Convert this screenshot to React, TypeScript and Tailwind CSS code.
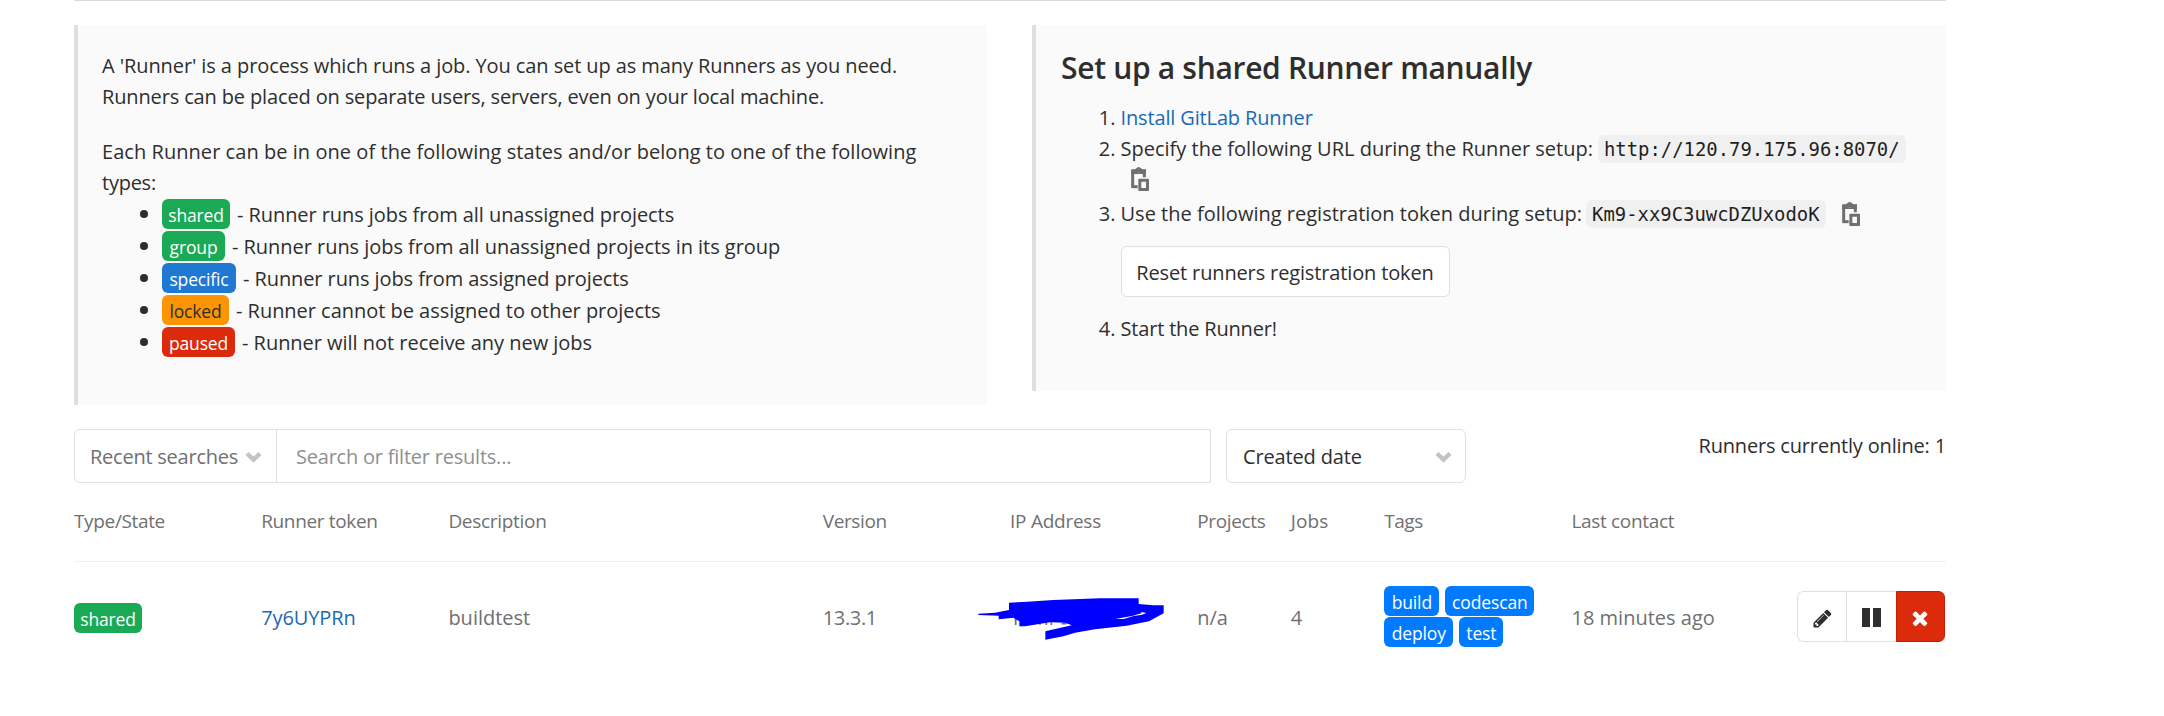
import type { ReactNode } from "react";

function Badge({ className, children }: { className: string; children: ReactNode }) {
  return (
    <span className={`flex h-[30px] shrink-0 items-center justify-center rounded-md text-[17.5px] leading-[30px] tracking-[-0.15px] ${className}`}>
      <span className="relative top-px">{children}</span>
    </span>
  );
}

function ClipboardIcon() {
  return (
    <svg className="h-6 w-[18px] shrink-0" viewBox="0 0 54 72" fill="none">
      <path d="M5 59V13h35v18" stroke="#707070" strokeWidth="9" />
      <path d="M1 59h19" stroke="#707070" strokeWidth="9" />
      <path fillRule="evenodd" d="M3 7h9l6-5q5-4 10 0l6 5h11v14H0V10zM23 8a5 5 0 1 0 .1 0z" fill="#707070" />
      <path fillRule="evenodd" d="M25 35h26q3 0 3 3v31q0 3-3 3H25q-3 0-3-3V38q0-3 3-3zm6 9v19h14V44z" fill="#707070" />
    </svg>
  );
}

function ChevronIcon() {
  return (
    <svg className="h-3 w-[17px] shrink-0" viewBox="0 0 17 12" fill="none">
      <path d="M2 2.5l6.5 6.2L15 2.5" stroke="#c4c4c4" strokeWidth="4.4" />
    </svg>
  );
}

function PencilIcon() {
  return (
    <svg className="size-[21px]" viewBox="0 0 1792 1792" fill="#2e2e2e">
      <path d="M491 1536l91-91-235-235-91 91v107h128v128h107zM1014 608q0-22-22-22-10 0-17 7l-542 542q-7 7-7 17 0 22 22 22 10 0 17-7l542-542q7-7 7-17zM960 416l416 416-832 832h-416v-416zM1643 512q0 53-37 90l-166 166-416-416 166-165q36-38 90-38 53 0 91 38l235 234q37 39 37 91z" />
    </svg>
  );
}

function CloseIcon() {
  return (
    <svg className="size-[22px]" viewBox="0 0 1792 1792" fill="#fff">
      <path d="M1490 1322q0 40-28 68l-136 136q-28 28-68 28t-68-28l-294-294-294 294q-28 28-68 28t-68-28l-136-136q-28-28-28-68t28-68l294-294-294-294q-28-28-28-68t28-68l136-136q28-28 68-28t68 28l294 294 294-294q28-28 68-28t68 28l136 136q28 28 28 68t-28 68l-294 294 294 294q28 28 28 68z" />
    </svg>
  );
}

function Scribble() {
  return (
    <svg className="absolute -left-10 -top-[27px] h-[60px] w-[210px]" viewBox="0 0 630 180">
      <path d="M137 84v21M134 88h8M190 101h5M210 92v12M229 97v8M244 97v8M275 101h14" stroke="#707070" strokeWidth="5" />
      <path
        d="M25 71L75 68 117 60V38L160 36 250 30 390 25H506V42L550 46H581V70L537 94 470 107 375 118 315 128 280 139 226 149V124L305 106 285 98 240 97 165 109H148V94L130 83 86 88V77L25 75Z"
        fill="#00f"
      />
      <path d="M436 87l50-9 28-8v-4l15 3-13 5-25 4-30 9z" fill="#fff" />
    </svg>
  );
}

const states = [
  { name: "shared", badge: "w-[68px] bg-[#1aaa55] text-white", text: "Runner runs jobs from all unassigned projects", track: "tracking-[-0.07px]" },
  { name: "group", badge: "w-[63px] bg-[#1aaa55] text-white", text: "Runner runs jobs from all unassigned projects in its group", track: "tracking-[-0.04px]" },
  { name: "specific", badge: "w-[74px] bg-[#1f78d1] text-white", text: "Runner runs jobs from assigned projects", track: "tracking-[-0.09px]" },
  { name: "locked", badge: "w-[67px] bg-[#fc9403] text-[#2e2e2e]", text: "Runner cannot be assigned to other projects", track: "tracking-[-0.03px]" },
  { name: "paused", badge: "w-[73px] bg-[#db2b0c] text-white", text: "Runner will not receive any new jobs", track: "tracking-[-0.03px]" },
];

const tags = [
  { name: "build", width: "w-[55px]" },
  { name: "codescan", width: "w-[89px]" },
  { name: "deploy", width: "w-[69px]" },
  { name: "test", width: "w-11" },
];

const columns = [
  { label: "Type/State", className: "w-[10%] tracking-[-0.35px]" },
  { label: "Runner token", className: "w-[10%] tracking-[-0.35px]" },
  { label: "Description", className: "w-1/5 tracking-[-0.3px]" },
  { label: "Version", className: "w-[10%] tracking-[-0.4px]" },
  { label: "IP Address", className: "w-[10%] tracking-[-0.25px]" },
  { label: "Projects", className: "w-[5%] tracking-[-0.35px]" },
  { label: "Jobs", className: "w-[5%] tracking-[0.15px]" },
  { label: "Tags", className: "w-[10%] tracking-[-0.5px]" },
  { label: "Last contact", className: "w-[10%] tracking-[-0.33px]" },
];

function Step({ n, children }: { n: number; children: ReactNode }) {
  return (
    <li className="flex">
      <span className="w-[60.5px] shrink-0 pr-[5px] text-right">{n}.</span>
      <div className="min-w-0 flex-1">{children}</div>
    </li>
  );
}

function Code({ className, children }: { className: string; children: ReactNode }) {
  return (
    <code className={`h-7 rounded-md bg-[#f0f0f0] px-1.5 font-['DejaVu_Sans_Mono',monospace] text-[18.9px] leading-7 text-[#1f1f1f] ${className}`}>
      {children}
    </code>
  );
}

export default function App() {
  return (
    <div className="h-[716px] bg-white font-['Open_Sans',sans-serif] text-[20px] leading-[31px] whitespace-nowrap text-[#2e2e2e]">
      <main className="ml-[74px] w-[1872px]">
        <div className="h-px bg-[#dbdbdb]" />

        <div className="mt-6 flex items-start justify-between">
          <section className="h-[380px] w-[913px] border-l-4 border-[#dfdfdf] bg-[#fafafa] pt-[25px] pl-6">
            <p className="tracking-[-0.09px]">A 'Runner' is a process which runs a job. You can set up as many Runners as you need.</p>
            <p className="tracking-[-0.14px]">Runners can be placed on separate users, servers, even on your local machine.</p>
            <p className="mt-6 tracking-[0.05px]">Each Runner can be in one of the following states and/or belong to one of the following</p>
            <p className="tracking-[-0.25px]">types:</p>
            <ul>
              {states.map((s) => (
                <li key={s.name} className="flex h-8 items-center pl-[38px]">
                  <span className="mr-[14px] size-2 rounded-full bg-[#2e2e2e]" />
                  <Badge className={s.badge}>{s.name}</Badge>
                  <span className={`ml-[7px] ${s.track}`}>- {s.text}</span>
                </li>
              ))}
            </ul>
          </section>

          <section className="h-[366px] w-[914px] border-l-4 border-[#dfdfdf] bg-[#fafafa] pt-[22px] pl-6">
            <h3 className="pl-px text-[30px] leading-[42px] font-semibold tracking-[-0.31px]">Set up a shared Runner manually</h3>
            <ol className="mt-[13px]">
              <Step n={1}>
                <a className="tracking-[-0.14px] text-[#1b69b6]">Install GitLab Runner</a>
              </Step>
              <Step n={2}>
                <div className="flex items-center">
                  <span>Specify the following URL during the Runner setup:</span>
                  <Code className="ml-[5px]">http://120.79.175.96:8070/</Code>
                </div>
                <div className="flex h-[34px] pt-[3px] pl-[10px]">
                  <ClipboardIcon />
                </div>
              </Step>
              <Step n={3}>
                <div className="flex items-center">
                  <span className="tracking-[0.01px]">Use the following registration token during setup:</span>
                  <Code className="mr-4 ml-1">Km9-xx9C3uwcDZUxodoK</Code>
                  <ClipboardIcon />
                </div>
                <button className="mt-[17px] mb-4 block h-[51px] w-[329px] rounded-md border border-[#dfdfdf] bg-white pt-px tracking-[-0.14px]">
                  Reset runners registration token
                </button>
              </Step>
              <Step n={4}>
                <span className="tracking-[-0.18px]">Start the Runner!</span>
              </Step>
            </ol>
          </section>
        </div>

        <div className="mt-6 flex h-[54px]">
          <div className="flex w-[1137px] rounded-l-md border border-[#dfdfdf]">
            <button className="flex w-[202px] items-center border-r border-[#dfdfdf] pl-[15px] text-[#707070]">
              <span className="pt-px tracking-[-0.24px]">Recent searches</span>
              <span className="ml-[7px] pt-0.5">
                <ChevronIcon />
              </span>
            </button>
            <span className="self-center pl-[19px] tracking-[-0.22px] text-[#8f8f8f]">Search or filter results...</span>
          </div>
          <button className="ml-[15px] flex w-60 items-center justify-between rounded-md border border-[#dfdfdf] pr-[13px] pl-4">
            <span className="pt-px tracking-[-0.15px]">Created date</span>
            <span className="pt-0.5">
              <ChevronIcon />
            </span>
          </button>
          <span className="ml-auto pt-px tracking-[-0.17px]">Runners currently online: 1</span>
        </div>

        <div className="mt-[23px] flex h-14 border-b border-[#f0f0f0] text-[19px] text-[#707070]">
          {columns.map((c) => (
            <div key={c.label} className={c.className}>{c.label}</div>
          ))}
        </div>

        <div className="flex h-[109px] items-center text-[#707070]">
          <div className="w-[10%] pt-[3px]">
            <Badge className="w-[68px] bg-[#1aaa55] text-white">shared</Badge>
          </div>
          <div className="w-[10%] pt-0.5 tracking-[-0.1px] text-[#1b69b6]">7y6UYPRn</div>
          <div className="w-1/5 pt-0.5">buildtest</div>
          <div className="w-[10%] pt-0.5 tracking-[-0.35px]">13.3.1</div>
          <div className="relative w-[10%]">
            <Scribble />
          </div>
          <div className="w-[5%] pt-0.5">n/a</div>
          <div className="w-[5%] pt-0.5">4</div>
          <div className="flex w-[10%] flex-wrap gap-x-1.5 gap-y-px">
            {tags.map((t) => (
              <Badge key={t.name} className={`bg-[#007bff] text-white ${t.width}`}>{t.name}</Badge>
            ))}
          </div>
          <div className="w-[10%] pt-0.5">18 minutes ago</div>
          <div className="flex w-[10%] justify-end pr-px">
            <div className="flex h-[51px] w-[148px] overflow-hidden rounded-md">
              <button className="flex w-[49px] items-center justify-center rounded-l-md border border-r-0 border-[#dfdfdf] pt-1 pl-px">
                <PencilIcon />
              </button>
              <button className="flex w-[50px] items-center justify-center gap-[3px] border border-r-0 border-[#dfdfdf] pt-0.5 pl-px">
                <span className="h-[19px] w-2 bg-[#2e2e2e]" />
                <span className="h-[19px] w-2 bg-[#2e2e2e]" />
              </button>
              <button className="flex w-[49px] items-center justify-center rounded-r-md border border-[#c91c00] bg-[#db2b0c] pt-[3px]">
                <CloseIcon />
              </button>
            </div>
          </div>
        </div>
      </main>
    </div>
  );
}
